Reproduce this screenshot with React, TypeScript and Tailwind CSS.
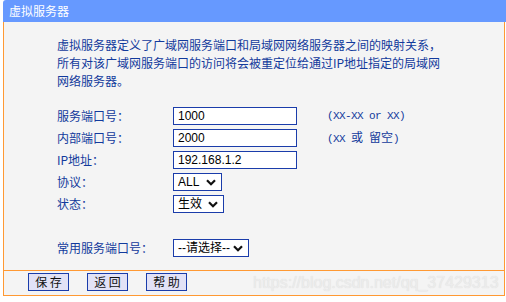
import React from "react";

function Chevron() {
  return (
    <svg width="10" height="7" viewBox="0 0 10 7" className="shrink-0">
      <path d="M1 1.2 L5 5.2 L9 1.2" fill="none" stroke="#111" strokeWidth="2.2" />
    </svg>
  );
}

function Input({ value }: { value: string }) {
  return (
    <div className="w-[124px] h-[18px] border border-[#1a3caa] bg-white flex items-center pl-[4px] text-[12px] text-black leading-none font-['Liberation_Sans',Arial,sans-serif]">
      {value}
    </div>
  );
}

function Select({ value, width }: { value: string; width: string }) {
  return (
    <div
      className={
        "h-[18px] border border-[#1a3caa] bg-white flex items-center justify-between pl-[4px] pr-[5px] text-[12px] text-black leading-none font-['Liberation_Sans','Noto_Sans_CJK_SC',sans-serif] " +
        width
      }
    >
      <span>{value}</span>
      <Chevron />
    </div>
  );
}

function Row({ label, children }: { label: string; children: React.ReactNode }) {
  return (
    <div className="h-[22px] flex items-center">
      <div className="w-[116px] text-[12px] text-[#123a9c]">{label}</div>
      {children}
    </div>
  );
}

function Btn({ label }: { label: string }) {
  return (
    <div className="w-[41px] h-[18px] border border-[#1a3caa] bg-[#e2e2f6] flex items-center justify-center text-[12px] text-[#111] leading-none">
      {label}
    </div>
  );
}

export default function App() {
  return (
    <div className="w-[506px] h-[302px] bg-white relative overflow-hidden font-['Noto_Sans_CJK_SC','Noto_Sans',sans-serif]">
      <div className="ml-[3px] h-[22px] bg-[#6699ff] rounded-tl-[3px] flex items-center pl-[6px] text-white text-[12px]">
        虚拟服务器
      </div>
      <div className="ml-[3px] w-[502px] h-[274px] bg-[#f4f4f4] border-l border-r border-b border-[#ff9933] flex flex-col">
        <div className="h-[248px] pt-[14px] pl-[53px] text-[#123a9c]">
          <div className="text-[12px] leading-[18px]">
            <div>虚拟服务器定义了广域网服务端口和局域网网络服务器之间的映射关系，</div>
            <div>所有对该广域网服务端口的访问将会被重定位给通过IP地址指定的局域网</div>
            <div>网络服务器。</div>
          </div>
          <div className="mt-[15px]">
            <Row label="服务端口号：">
              <Input value="1000" />
              <span className="ml-[30px] text-[11px] tracking-[-0.6px] text-[#123a9c] font-['Liberation_Mono',monospace]">
                (XX-XX or XX)
              </span>
            </Row>
            <Row label="内部端口号：">
              <Input value="2000" />
              <span className="ml-[30px] text-[11px] tracking-[-0.6px] text-[#123a9c] font-['Liberation_Mono',monospace]">
                (XX <span className="text-[12px] tracking-normal font-['Noto_Sans_CJK_SC',sans-serif]">或</span>{" "}
                <span className="text-[12px] tracking-normal font-['Noto_Sans_CJK_SC',sans-serif]">留空</span>)
              </span>
            </Row>
            <Row label="IP地址：">
              <Input value="192.168.1.2" />
            </Row>
            <Row label="协议：">
              <Select value="ALL" width="w-[49px]" />
            </Row>
            <Row label="状态：">
              <Select value="生效" width="w-[51px]" />
            </Row>
            <div className="h-[22px]" />
            <Row label="常用服务端口号：">
              <Select value="--请选择--" width="w-[76px]" />
            </Row>
          </div>
        </div>
        <div className="border-t border-[#ff9933] flex-1 flex items-start pt-[2px] pl-[24px] gap-[18px]">
          <Btn label="保 存" />
          <Btn label="返 回" />
          <Btn label="帮 助" />
        </div>
      </div>
      <div className="absolute left-[253px] top-[272px] text-[16px] leading-[22px] text-[#ececec] font-['Liberation_Sans',Arial,sans-serif] [text-shadow:0_0_1px_#d8d8d8]">
        https://blog.csdn.net/qq_37429313
      </div>
    </div>
  );
}
